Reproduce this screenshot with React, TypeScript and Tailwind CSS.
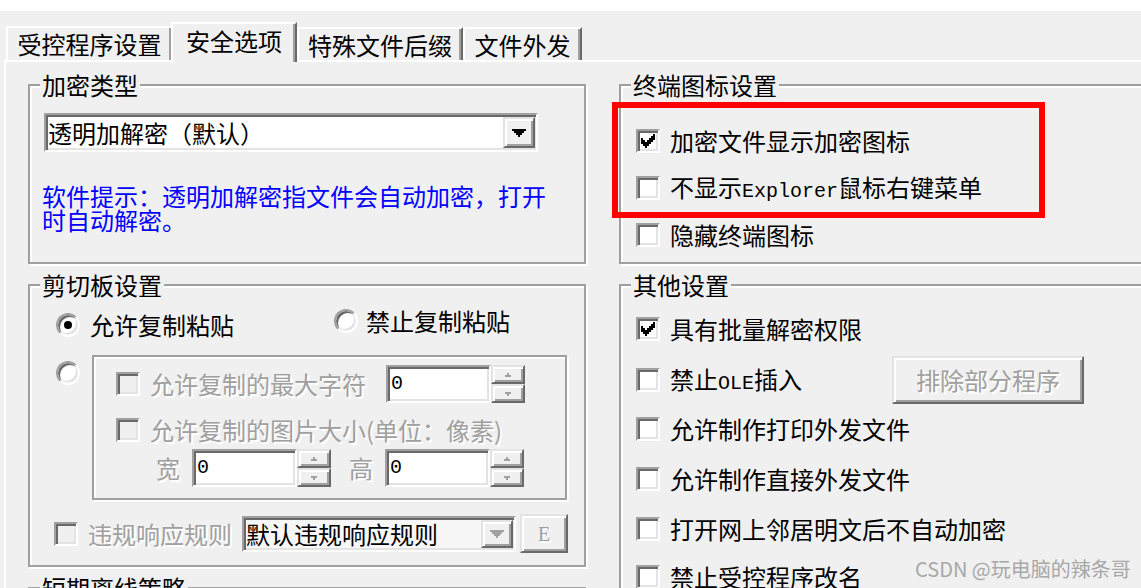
import type { ReactNode } from 'react'

const sunken =
  'border-2 border-t-[#a0a0a0] border-l-[#a0a0a0] border-r-white border-b-white shadow-[inset_2px_2px_0_#696969,inset_-2px_-2px_0_#e3e3e3]'
const raised =
  'border-2 border-t-[#e3e3e3] border-l-[#e3e3e3] border-r-[#696969] border-b-[#696969] shadow-[inset_2px_2px_0_#fff,inset_-2px_-2px_0_#a0a0a0]'
const etched = 'border-2 border-[#a0a0a0] shadow-[inset_2px_2px_0_#fff,2px_2px_0_#fff]'
const dimText = 'text-[#a0a0a0] [text-shadow:2px_2px_0_#fff]'
const mono = "font-['Liberation_Mono',monospace] text-[20px] leading-none"

function Check({ checked = false, disabled = false }: { checked?: boolean; disabled?: boolean }) {
  return (
    <span
      className={`flex h-[24px] w-[24px] shrink-0 items-center justify-center ${sunken} ${
        disabled ? 'bg-[#f0f0f0]' : 'bg-white'
      }`}
    >
      {checked && (
        <svg width="14" height="14" viewBox="0 0 7 7" shapeRendering="crispEdges">
          <path
            fill="#000"
            d="M6 0h1v1H6zM5 1h2v1H5zM0 2h1v1H0zM4 2h3v1H4zM0 3h2v1H0zM3 3h3v1H3zM0 4h5v1H0zM1 5h3v1H1zM2 6h1v1H2z"
          />
        </svg>
      )}
    </span>
  )
}

function Radio({ checked = false }: { checked?: boolean }) {
  return (
    <span className="flex h-[24px] w-[24px] shrink-0 items-center justify-center rounded-full border-2 border-t-[#a0a0a0] border-l-[#a0a0a0] border-r-white border-b-white bg-white shadow-[inset_2px_2px_0_#696969,inset_-2px_-2px_0_#e3e3e3]">
      {checked && <span className="h-[8px] w-[8px] rounded-full bg-black" />}
    </span>
  )
}

function DropArrow({ color = '#000' }: { color?: string }) {
  return (
    <svg width="14" height="8" viewBox="0 0 7 4" shapeRendering="crispEdges">
      <path fill={color} d="M0 0h7v1H0zM1 1h5v1H1zM2 2h3v1H2zM3 3h1v1H3z" />
    </svg>
  )
}

function SpinArrow({ up = false }: { up?: boolean }) {
  return (
    <svg width="6" height="4" viewBox="0 0 3 2" shapeRendering="crispEdges">
      <path fill="#a0a0a0" d={up ? 'M1 0h1v1H1zM0 1h3v1H0z' : 'M0 0h3v1H0zM1 1h1v1H1z'} />
    </svg>
  )
}

function Spin({ value }: { value: string }) {
  return (
    <div className="flex h-[38px] shrink-0">
      <div className={`flex w-[105px] items-center bg-white pl-[3px] ${sunken}`}>
        <span className={mono}>{value}</span>
      </div>
      <div className="flex w-[34px] flex-col">
        <div className={`flex flex-1 items-center justify-center bg-[#f0f0f0] ${raised}`}>
          <SpinArrow up />
        </div>
        <div className={`flex flex-1 items-center justify-center bg-[#f0f0f0] ${raised}`}>
          <SpinArrow />
        </div>
      </div>
    </div>
  )
}

function Group({ title, className = '', children }: { title: string; className?: string; children?: ReactNode }) {
  return (
    <div className={`flex shrink-0 flex-col ${etched} ${className}`}>
      <span className="-mt-[13px] ml-[10px] self-start bg-[#f0f0f0] px-[2px] text-[24px] leading-[24px]">
        {title}
      </span>
      {children}
    </div>
  )
}

function CheckRow({
  label,
  checked,
  disabled,
  className = '',
}: {
  label: ReactNode
  checked?: boolean
  disabled?: boolean
  className?: string
}) {
  return (
    <div className={`flex h-[24px] items-center gap-[10px] ${className}`}>
      <Check checked={checked} disabled={disabled} />
      <span
        className={`flex items-baseline whitespace-nowrap text-[24px] leading-[24px] ${disabled ? dimText : ''}`}
      >
        {label}
      </span>
    </div>
  )
}

function Tab({ label, active = false, className = '' }: { label: string; active?: boolean; className?: string }) {
  return (
    <div
      className={`flex items-center justify-center border-t-2 border-l-2 border-r-2 border-t-white border-l-white border-r-[#696969] bg-[#f0f0f0] shadow-[inset_-2px_0_0_#a0a0a0] text-[24px] leading-none whitespace-nowrap ${
        active ? 'relative z-10 -mb-[2px] -ml-[2px] h-[40px] pb-[4px]' : ''
      } ${className}`}
    >
      {label}
    </div>
  )
}

export default function App() {
  return (
    <div className="relative h-[588px] w-[1141px] overflow-hidden bg-[#f0f0f0] font-['Noto_Sans_CJK_SC',sans-serif] text-black">
      <div className="h-[11px] bg-white" />

      {/* tab strip */}
      <div className="flex h-[49px] items-end pl-[6px]">
        <Tab label="受控程序设置" className="h-[34px] w-[167px]" />
        <Tab label="安全选项" active className="w-[126px]" />
        <Tab label="特殊文件后缀" className="h-[33px] w-[166px]" />
        <Tab label="文件外发" className="h-[33px] w-[119px]" />
      </div>

      {/* tab page */}
      <div className="ml-[4px] flex gap-[33px] border-t-2 border-l-2 border-white pt-[22px] pl-[22px]">
        {/* left column */}
        <div className="flex w-[558px] shrink-0 flex-col gap-[20px]">
          <Group title="加密类型" className="h-[180px]">
            <div className={`mt-[16px] ml-[14px] flex h-[39px] w-[494px] items-center bg-white ${sunken}`}>
              <span className="flex-1 pl-[2px] text-[24px] leading-none">透明加解密（默认）</span>
              <span className={`mr-[1px] flex h-[31px] w-[32px] items-center justify-center bg-[#f0f0f0] ${raised}`}>
                <DropArrow />
              </span>
            </div>
            <p className="mt-[32px] ml-[12px] text-[24px] leading-[24px] text-[#0000ff]">
              软件提示：透明加解密指文件会自动加密，打开
              <br />
              时自动解密。
            </p>
          </Group>

          <Group title="剪切板设置" className="h-[283px]">
            <div className="mt-[12px] ml-[26px] flex items-start">
              <div className="mt-[4px] flex items-center gap-[10px]">
                <Radio checked />
                <span className="text-[24px] leading-[24px]">允许复制粘贴</span>
              </div>
              <div className="ml-[100px] flex items-center gap-[8px]">
                <Radio />
                <span className="text-[24px] leading-[24px]">禁止复制粘贴</span>
              </div>
            </div>

            <div className="mt-[18px] ml-[26px] flex items-start gap-[12px]">
              <div className="mt-[6px]">
                <Radio />
              </div>
              <div className={`flex h-[145px] w-[475px] flex-col ${etched}`}>
                <div className="mt-[8px] ml-[22px] flex h-[38px] items-center">
                  <CheckRow label="允许复制的最大字符" disabled />
                  <div className="ml-[20px]">
                    <Spin value="0" />
                  </div>
                </div>
                <CheckRow label="允许复制的图片大小(单位：像素)" disabled className="mt-[15px] ml-[22px]" />
                <div className="mt-[7px] ml-[62px] flex items-center">
                  <span className={`text-[24px] leading-[24px] ${dimText}`}>宽</span>
                  <div className="ml-[12px]">
                    <Spin value="0" />
                  </div>
                  <span className={`ml-[18px] text-[24px] leading-[24px] ${dimText}`}>高</span>
                  <div className="ml-[12px]">
                    <Spin value="0" />
                  </div>
                </div>
              </div>
            </div>

            <div className="mt-[14px] ml-[24px] flex items-center">
              <CheckRow label="违规响应规则" disabled />
              <div className={`ml-[10px] flex h-[36px] w-[274px] items-center bg-[#f7f7f7] ${sunken}`}>
                <span className="flex-1 pl-[2px] text-[24px] leading-none">默认违规响应规则</span>
                <span
                  className={`mr-[1px] flex h-[28px] w-[32px] items-center justify-center bg-[#f0f0f0] ${raised}`}
                >
                  <DropArrow color="#a0a0a0" />
                </span>
              </div>
              <div className={`ml-[4px] flex h-[39px] w-[48px] items-center justify-center bg-[#f0f0f0] ${raised}`}>
                <span className={`font-['Liberation_Serif',serif] text-[20px] leading-none ${dimText}`}>E</span>
              </div>
            </div>
          </Group>

          <Group title="短期离线策略" className="h-[200px]" />
        </div>

        {/* right column */}
        <div className="flex w-[560px] shrink-0 flex-col gap-[20px]">
          <Group title="终端图标设置" className="h-[180px]">
            <CheckRow label="加密文件显示加密图标" checked className="mt-[32px] ml-[15px]" />
            <CheckRow
              label={
                <>
                  不显示<span className={mono}>Explorer</span>鼠标右键菜单
                </>
              }
              className="mt-[23px] ml-[15px]"
            />
            <CheckRow label="隐藏终端图标" className="mt-[23px] ml-[15px]" />
          </Group>

          <Group title="其他设置" className="h-[340px]">
            <CheckRow label="具有批量解密权限" checked className="mt-[20px] ml-[15px]" />
            <div className="mt-[15px] ml-[15px] flex h-[48px] items-center">
              <CheckRow
                label={
                  <>
                    禁止<span className={mono}>OLE</span>插入
                  </>
                }
                className="w-[246px]"
              />
              <div
                className={`ml-[10px] flex h-[48px] w-[192px] items-center justify-center bg-[#f0f0f0] ${raised}`}
              >
                <span className={`text-[24px] leading-none ${dimText}`}>排除部分程序</span>
              </div>
            </div>
            <CheckRow label="允许制作打印外发文件" className="mt-[13px] ml-[15px]" />
            <CheckRow label="允许制作直接外发文件" className="mt-[26px] ml-[15px]" />
            <CheckRow label="打开网上邻居明文后不自动加密" className="mt-[26px] ml-[15px]" />
            <CheckRow label="禁止受控程序改名" className="mt-[24px] ml-[15px]" />
          </Group>
        </div>
      </div>

      {/* annotation box */}
      <div className="absolute top-[102px] left-[612px] h-[116px] w-[433px] border-[6px] border-[#ff0000]" />

      {/* watermark */}
      <div className="absolute top-[555px] left-[915px] text-[20px] leading-[28px] whitespace-nowrap text-[#a8a8a8]">
        CSDN @玩电脑的辣条哥
      </div>
    </div>
  )
}
